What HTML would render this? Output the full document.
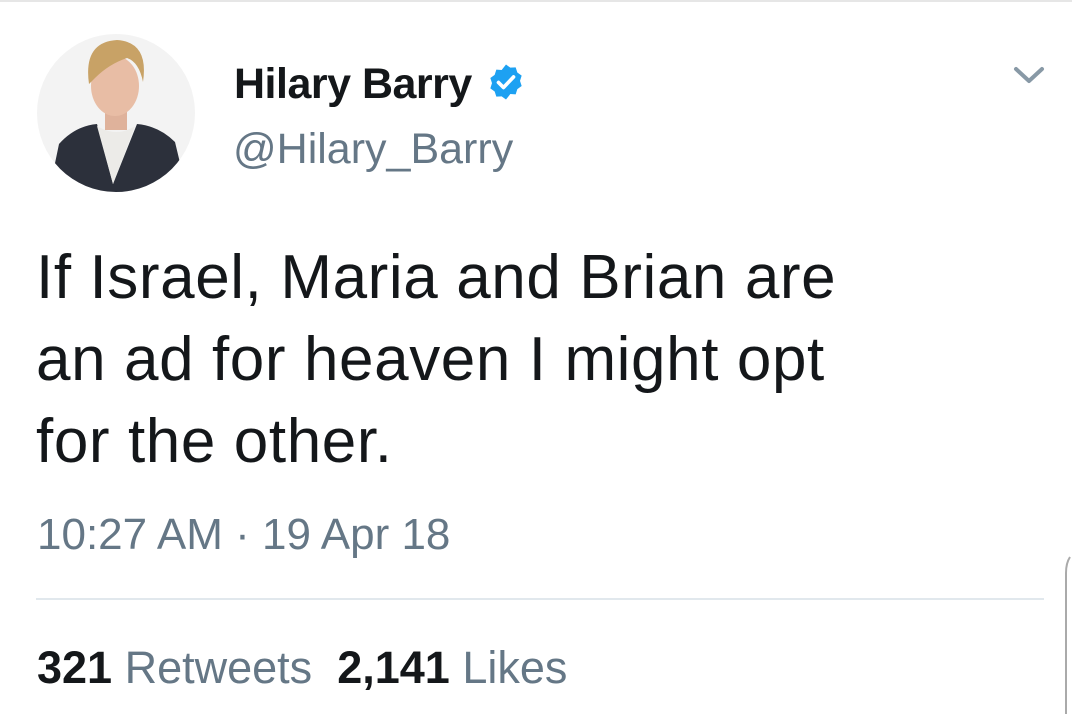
<!DOCTYPE html>
<html><head><style>
body{margin:0;width:1072px;height:714px;background:#fff;font-family:"Liberation Sans",Arial,sans-serif;position:relative;overflow:hidden}
.a{position:absolute;white-space:nowrap}
</style></head><body>
<div class="a" style="left:0;top:0;width:1072px;height:2px;background:#e6e6e6"></div>
<svg class="a" style="left:37px;top:34px" width="158" height="158" viewBox="0 0 158 158">
<defs><clipPath id="c"><circle cx="79" cy="79" r="79"/></clipPath></defs>
<g clip-path="url(#c)">
<rect width="158" height="158" fill="#f3f3f3"/>
<path d="M12 158 L22 110 Q38 92 60 90 L76 150 L100 90 Q122 92 138 108 L150 158Z" fill="#2c303b"/>
<path d="M60 92 L76 150 L98 92 Q80 104 60 92Z" fill="#ecebe8"/>
<rect x="68" y="66" width="22" height="30" fill="#dfb29b"/>
<ellipse cx="78" cy="52" rx="24" ry="30" fill="#e8bda5"/>
<path d="M52 50 Q46 8 80 6 Q112 8 106 48 Q102 28 90 24 Q72 30 58 44Z" fill="#c8a266"/>
</g></svg>
<div class="a" style="left:234px;top:60px;font-size:43px;font-weight:bold;color:#14171a;letter-spacing:-0.5px">Hilary Barry</div>
<svg class="a" style="left:486px;top:62px" width="40" height="40" viewBox="0 0 24 24"><path fill="#1da1f2" d="M12 1.5l2.6 1.9 3.2-.2 1 3.1 2.6 1.9-1 3.1 1 3.1-2.6 1.9-1 3.1-3.2-.2L12 22.5l-2.6-1.9-3.2.2-1-3.1L2.6 15.8l1-3.1-1-3.1 2.6-1.9 1-3.1 3.2.2z"/><path d="M7.5 12.3l3 3 6-6.3" stroke="#fff" stroke-width="2.2" fill="none" stroke-linecap="round" stroke-linejoin="round"/></svg>
<div class="a" style="left:233px;top:125px;font-size:43px;color:#657786">@Hilary_Barry</div>
<svg class="a" style="left:1012px;top:64px" width="34" height="22" viewBox="0 0 34 22"><path d="M4 5 L17 17 L30 5" stroke="#8899a6" stroke-width="4" fill="none" stroke-linecap="round" stroke-linejoin="round"/></svg>
<div class="a" style="left:36px;top:237px;font-size:62px;line-height:82px;letter-spacing:0.6px;color:#14171a">If Israel, Maria and Brian are<br>an ad for heaven I might opt<br>for the other.</div>
<div class="a" style="left:37px;top:513px;font-size:44px;line-height:1;color:#657786">10:27 AM · 19 Apr 18</div>
<div class="a" style="left:36px;top:598px;width:1008px;height:2px;background:#e1e8ed"></div>
<div class="a" style="left:37px;top:645px;font-size:45px;line-height:1;color:#657786"><b style="color:#14171a">321</b> Retweets&nbsp;&nbsp;<b style="color:#14171a">2,141</b> Likes</div>
<svg class="a" style="left:1060px;top:555px" width="12" height="159"><path d="M10 2 Q6 8 6 18 L6 159" stroke="#aaa" stroke-width="2" fill="none"/></svg>
</body></html>
